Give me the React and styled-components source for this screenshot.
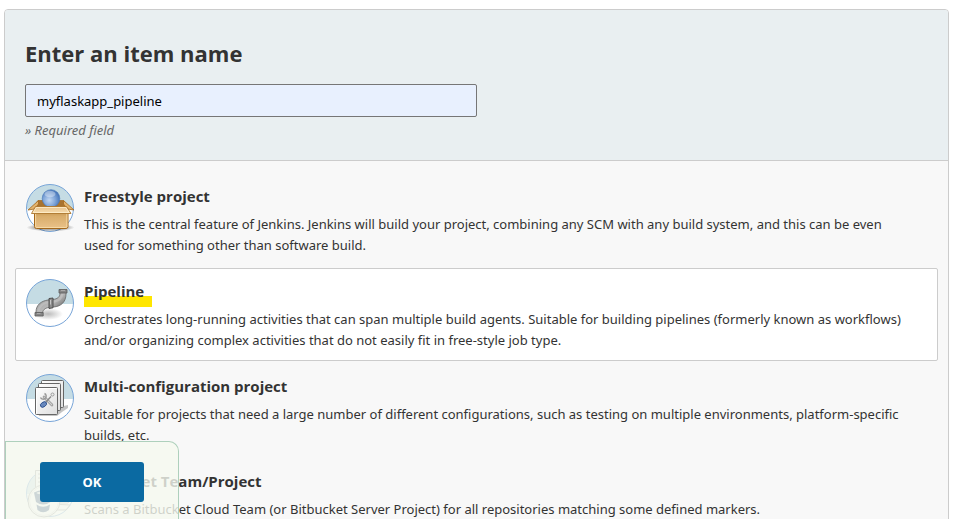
import React, { useState } from "react";
import styled, { createGlobalStyle } from "styled-components";

const HEADING_FONT = `"Segoe UI", "Open Sans", sans-serif`;

const GlobalStyle = createGlobalStyle`
  *, *::before, *::after { box-sizing: border-box; }
  body {
    margin: 0;
    background: #fff;
    color: #333;
    font-family: "Segoe UI", "Noto Sans", sans-serif;
    font-size: 13px;
    line-height: 21px;
  }
`;

const Page = styled.main`
  height: 100vh;
  overflow: hidden;
  padding: 9px 4px 0;
`;

const Panel = styled.form`
  border: 1px solid #ccc;
  border-radius: 4px;
  background: #f8f8f8;
  overflow: hidden;
`;

const NameSection = styled.header`
  display: flex;
  flex-direction: column;
  align-items: flex-start;
  padding: 27px 20px 19px;
  background: #e9eff1;
  border-bottom: 1px solid #ccc;
`;

const NameLabel = styled.label`
  margin-bottom: 15px;
  font-family: ${HEADING_FONT};
  font-size: 22px;
  font-weight: 700;
  line-height: 32px;
`;

const NameInput = styled.input`
  width: 50%;
  height: 33px;
  padding: 0 11px;
  border: 1px solid #767676;
  border-radius: 2px;
  background: #e8f0fe;
  color: #000;
  font: inherit;
  outline: none;
`;

const Hint = styled.p`
  margin: 3px 0 0;
  color: #666;
  font-style: italic;
`;

const ItemList = styled.ul`
  display: flex;
  flex-direction: column;
  gap: 2px;
  margin: 0;
  padding: 12px 10px;
  list-style: none;
`;

const Item = styled.label`
  display: flex;
  gap: 10px;
  padding: 10px 10px 9px;
  border: 1px solid ${(p) => (p.$selected ? "#ccc" : "transparent")};
  border-radius: 2px;
  background: ${(p) => (p.$selected ? "#fff" : "transparent")};
  cursor: pointer;
`;

const HiddenRadio = styled.input`
  position: absolute;
  width: 1px;
  height: 1px;
  margin: 0;
  opacity: 0;
`;

const ItemIcon = styled.svg`
  flex: none;
  width: 48px;
  height: 48px;
  overflow: visible;
`;

const ItemText = styled.span`
  display: flex;
  flex-direction: column;
  align-items: flex-start;
  gap: 2px;
  padding-right: 16px;
`;

const ItemTitle = styled.span`
  padding: 0 8px 3px 0;
  font-family: ${HEADING_FONT};
  font-size: 15px;
  font-weight: 700;
  line-height: 25px;
  background: ${(p) =>
    p.$marked
      ? "linear-gradient(#ffe600, #ffe600) 0 100% / 100% 11px no-repeat"
      : "none"};
`;

const ItemDescription = styled.span`
  min-height: 42px;
`;

const ActionBar = styled.footer`
  position: fixed;
  bottom: 0;
  left: 5px;
  padding: 20px 34px 17px;
  border: 1px solid #aed0bc;
  border-width: 1px 1px 0;
  border-radius: 0 10px 0 0;
  background: rgba(245, 249, 239, 0.8);
`;

const OkButton = styled.button`
  display: block;
  width: 104px;
  height: 40px;
  border: 0;
  border-radius: 3px;
  background: #0b6aa2;
  color: #fff;
  font: inherit;
  font-weight: 700;
  cursor: pointer;
`;

function Backdrop({ id }) {
  return (
    <>
      <defs>
        <clipPath id={`${id}-clip`}>
          <circle cx="24" cy="24" r="23.5" />
        </clipPath>
      </defs>
      <g clipPath={`url(#${id}-clip)`}>
        <rect width="48" height="48" fill="#fff" />
        <rect width="48" height="25" fill="#c5dce4" />
      </g>
      <circle cx="24" cy="24" r="23.5" fill="none" stroke="#78a5d8" />
    </>
  );
}

function BoxIcon() {
  return (
    <ItemIcon viewBox="0 0 48 48" aria-hidden="true">
      <Backdrop id="box" />
      <defs>
        <linearGradient id="box-front" x1="0" y1="0" x2="0" y2="1">
          <stop offset="0" stopColor="#c08f48" />
          <stop offset=".35" stopColor="#d9ad6b" />
          <stop offset="1" stopColor="#eac28a" />
        </linearGradient>
        <linearGradient id="box-flap" x1="0" y1="0" x2="0" y2="1">
          <stop offset="0" stopColor="#e8c28b" />
          <stop offset="1" stopColor="#f6ddb0" />
        </linearGradient>
        <radialGradient id="box-ball" cx=".4" cy=".6" r=".65">
          <stop offset="0" stopColor="#c3d8f3" />
          <stop offset=".5" stopColor="#83a8da" />
          <stop offset="1" stopColor="#3f6fb5" />
        </radialGradient>
        <radialGradient id="box-shadow">
          <stop offset="0" stopColor="#000" stopOpacity=".55" />
          <stop offset=".7" stopColor="#000" stopOpacity=".25" />
          <stop offset="1" stopColor="#000" stopOpacity="0" />
        </radialGradient>
      </defs>
      <ellipse cx="24.500" cy="43.500" rx="24" ry="4" fill="url(#box-shadow)" />
      <path d="M12 16.500H37.500L40 20.500V29H9V20.500Z" fill="#a87330" stroke="#a4681c" strokeWidth=".7" />
      <path d="M12.500 16.500 2 26 8.500 25 12.500 20ZM37.500 16.500 48 26 41.500 25 37.500 20Z" fill="#e3b46e" stroke="#a4681c" strokeWidth=".8" />
      <circle cx="25" cy="14.500" r="8.800" fill="url(#box-ball)" stroke="#4d7cbb" strokeWidth=".7" />
      <ellipse cx="24" cy="10" rx="5.500" ry="3.300" fill="#fff" opacity=".35" />
      <path d="M8.500 26H42V42.500Q42 44.500 40 44.500H10.500Q8.500 44.500 8.500 42.500Z" fill="url(#box-front)" stroke="#a4681c" />
      <path d="M9.600 29V42.500Q9.600 43.500 10.600 43.500H39.800Q40.900 43.500 40.900 42.500V29" fill="none" stroke="#f7dba8" strokeWidth=".9" />
      <path d="M9.500 22.500H40.500L45 29.500H5.500Z" fill="url(#box-flap)" stroke="#ad762d" strokeWidth=".9" />
      <path d="M10.200 23.500H39.900L43 28.500H7.200Z" fill="none" stroke="#fff0ce" strokeWidth=".8" />
    </ItemIcon>
  );
}

function PipeIcon() {
  return (
    <ItemIcon viewBox="0 0 48 48" aria-hidden="true">
      <Backdrop id="pipe" />
      <defs>
        <linearGradient id="pipe-metal" x1="0" y1="0" x2="1" y2="1">
          <stop offset="0" stopColor="#777" />
          <stop offset=".3" stopColor="#aaa" />
          <stop offset=".52" stopColor="#b9b9b9" />
          <stop offset=".75" stopColor="#777" />
          <stop offset="1" stopColor="#555" />
        </linearGradient>
        <radialGradient id="pipe-shadow">
          <stop offset="0" stopColor="#777" stopOpacity=".5" />
          <stop offset="1" stopColor="#777" stopOpacity="0" />
        </radialGradient>
      </defs>
      <ellipse cx="22" cy="35" rx="15" ry="6" fill="url(#pipe-shadow)" />
      <path d="M33.500 12H40V15C40 23 35 27.500 27.500 28L23 28.500C19 29 16.500 31 16.500 34.500V36.500H10V33C10 26 15 22 22 21L27 20.500C31.500 20 34 18 34 14Z" fill="url(#pipe-metal)" stroke="#666" strokeWidth=".8" />
      <path d="M12.500 32C13.500 26.500 17 24 23 23.300L28 22.800C33 22 36 19 36.500 14.500" fill="none" stroke="#c3c3c3" strokeWidth="2" opacity=".6" />
      <path d="M33 10.500H41V14H33ZM9 33.500H17.200V37H9Z" fill="#858585" stroke="#5a5a5a" strokeWidth=".8" />
      <path d="M35 11.500H39M11 34.500H14.500" stroke="#aaa" />
      <path d="M23 19.500 27 19V28.800L23 29.500Z" fill="#8d8d8d" stroke="#454545" strokeWidth=".9" />
      <path d="M24.500 21V25.500" stroke="#c7c7c7" />
    </ItemIcon>
  );
}

function PagesIcon() {
  return (
    <ItemIcon viewBox="0 0 48 48" aria-hidden="true">
      <Backdrop id="pages" />
      <defs>
        <linearGradient id="pages-paper" x1="0" y1="0" x2="1" y2="1">
          <stop offset="0" stopColor="#fff" />
          <stop offset="1" stopColor="#dedede" />
        </linearGradient>
      </defs>
      <path d="M12 38 42 31V34L36 38 31 42H13Z" fill="#555" opacity=".35" />
      <g fill="url(#pages-paper)" stroke="#666" strokeLinejoin="round">
        <rect x="15.500" y="6.500" width="22" height="27" rx="1" />
        <rect x="12.500" y="9.500" width="22" height="27" rx="1" />
        <rect x="9.500" y="13.500" width="22" height="27" rx="1" />
      </g>
      <path d="M10.500 39.500V14.500H30.500" fill="none" stroke="#fff" />
      <path d="M18 23 26 31" stroke="#8c8c8c" strokeWidth="2.600" strokeLinecap="round" />
      <path d="M18 23 26 31" stroke="#d1d1d1" strokeWidth="1.200" strokeLinecap="round" />
      <path d="M18.500 19.500A3 3 0 1 1 14.500 23.500" fill="none" stroke="#999" strokeWidth="1.400" />
      <path d="M20 28 25 22.500" stroke="#888" strokeWidth="1.300" />
      <circle cx="26.500" cy="20.500" r="1.500" fill="#eee" stroke="#999" />
      <ellipse cx="17.500" cy="30.500" rx="3.400" ry="2.300" transform="rotate(-35 17.500 30.500)" fill="#6888bd" stroke="#254a87" strokeWidth=".8" />
    </ItemIcon>
  );
}

function BitbucketIcon() {
  return (
    <ItemIcon viewBox="0 0 48 48" aria-hidden="true">
      <Backdrop id="bucket" />
      <g fill="#f2f2f2" stroke="#999">
        <path d="M9.500 1.500H26.500V24H9.500Z" />
        <path d="M28 28 45 30 42 34H29ZM26 35 44 36 40 41H27Z" />
        <path d="M12 5H24M12 9H24M12 13H24" />
      </g>
      <circle cx="18" cy="32" r="16" fill="#f7f7f7" stroke="#999" />
      <circle cx="18" cy="32" r="14.500" fill="none" stroke="#ddd" />
      <path d="M8 23.500Q17 19 26 23.500L24.500 33Q17 38 10 33Z" fill="#304e77" />
      <ellipse cx="17" cy="24" rx="6.500" ry="1.500" fill="#c6cfda" />
      <ellipse cx="17" cy="29.500" rx="3" ry="2.500" fill="#c6cfda" />
      <path d="M10.500 35.500Q17 40 24 35.500L23 41Q17 45.500 11.500 41Z" fill="#304e77" />
    </ItemIcon>
  );
}

const ITEM_TYPES = [
  {
    id: "freestyle",
    title: "Freestyle project",
    Icon: BoxIcon,
    description:
      "This is the central feature of Jenkins. Jenkins will build your project, combining any SCM with any build system, and this can be even used for something other than software build.",
  },
  {
    id: "pipeline",
    title: "Pipeline",
    Icon: PipeIcon,
    marked: true,
    description:
      "Orchestrates long-running activities that can span multiple build agents. Suitable for building pipelines (formerly known as workflows) and/or organizing complex activities that do not easily fit in free-style job type.",
  },
  {
    id: "matrix",
    title: "Multi-configuration project",
    Icon: PagesIcon,
    description:
      "Suitable for projects that need a large number of different configurations, such as testing on multiple environments, platform-specific builds, etc.",
  },
  {
    id: "bitbucket",
    title: "Bitbucket Team/Project",
    Icon: BitbucketIcon,
    description:
      "Scans a Bitbucket Cloud Team (or Bitbucket Server Project) for all repositories matching some defined markers.",
  },
];

export default function App() {
  const [name, setName] = useState("myflaskapp_pipeline");
  const [selected, setSelected] = useState("pipeline");

  return (
    <>
      <GlobalStyle />
      <Page>
        <Panel onSubmit={(e) => e.preventDefault()}>
          <NameSection>
            <NameLabel htmlFor="name">Enter an item name</NameLabel>
            <NameInput
              id="name"
              type="text"
              value={name}
              spellCheck={false}
              onChange={(e) => setName(e.target.value)}
            />
            <Hint>» Required field</Hint>
          </NameSection>
          <ItemList>
            {ITEM_TYPES.map(({ id, title, Icon, marked, description }) => (
              <li key={id}>
                <Item $selected={selected === id}>
                  <HiddenRadio
                    type="radio"
                    name="mode"
                    value={id}
                    checked={selected === id}
                    onChange={() => setSelected(id)}
                  />
                  <Icon />
                  <ItemText>
                    <ItemTitle $marked={marked}>{title}</ItemTitle>
                    <ItemDescription>{description}</ItemDescription>
                  </ItemText>
                </Item>
              </li>
            ))}
          </ItemList>
          <ActionBar>
            <OkButton type="submit">OK</OkButton>
          </ActionBar>
        </Panel>
      </Page>
    </>
  );
}
